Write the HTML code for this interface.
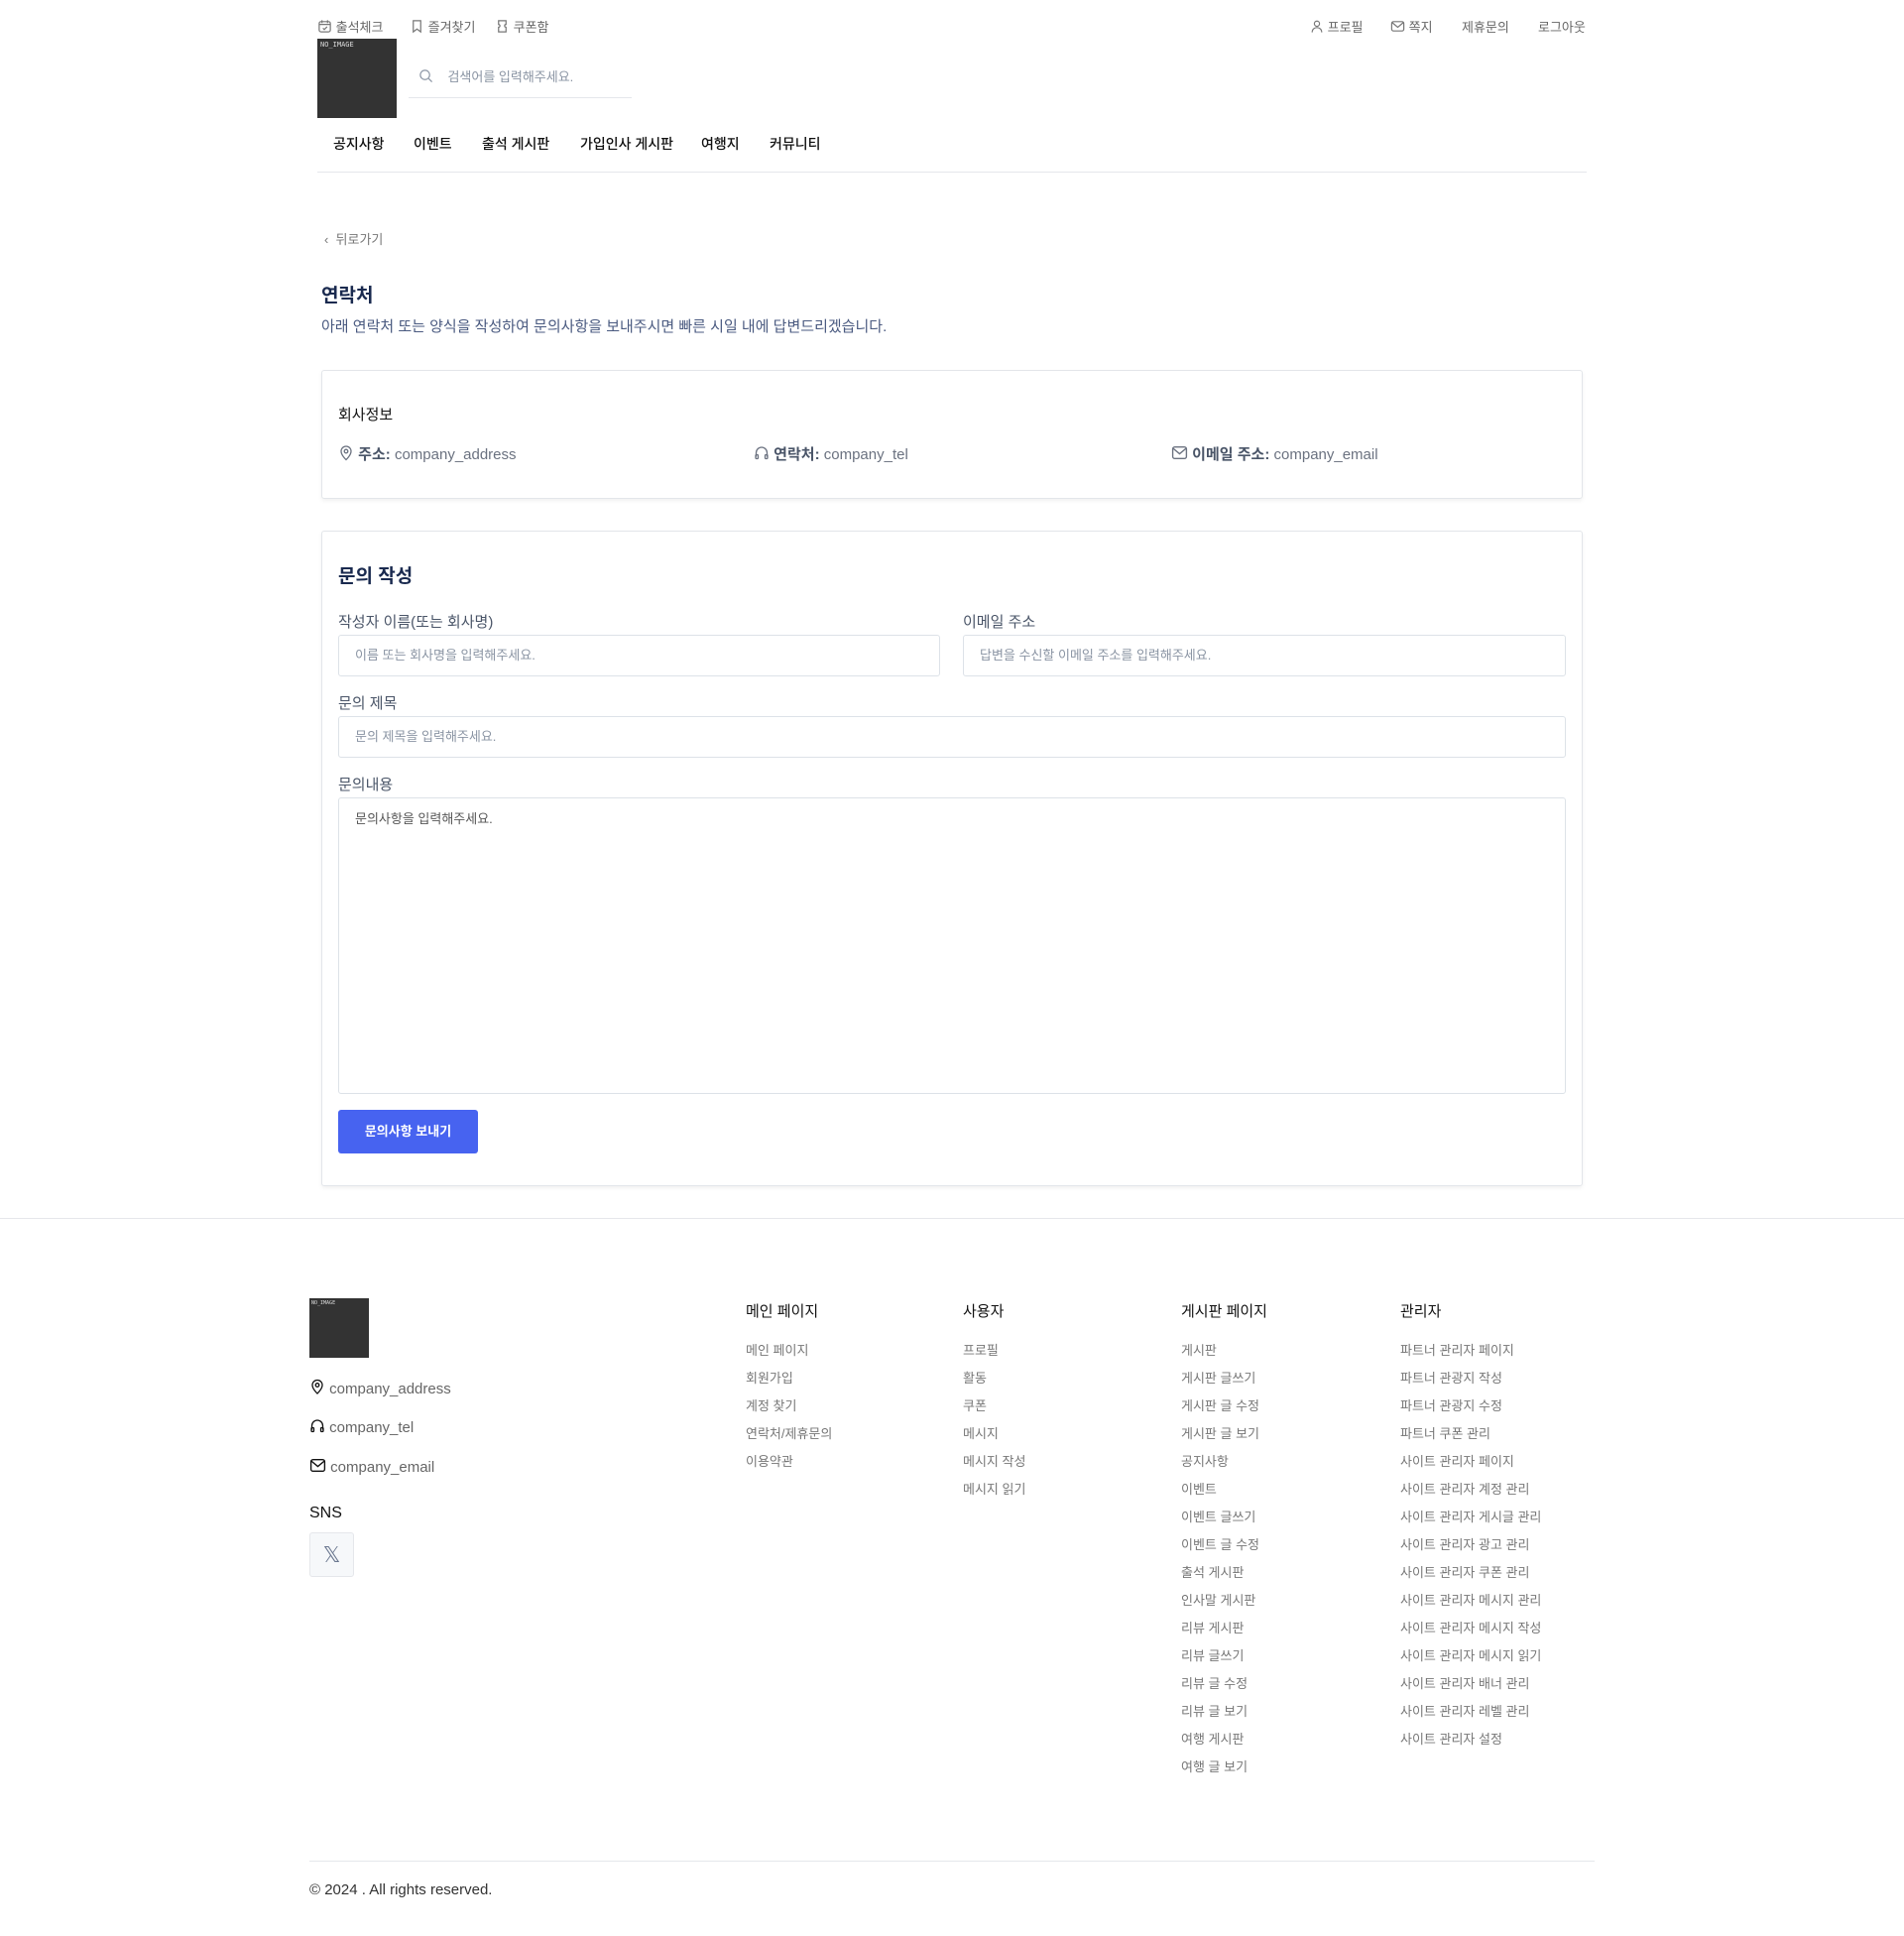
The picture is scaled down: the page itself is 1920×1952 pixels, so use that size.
<!DOCTYPE html>
<html><head><meta charset="utf-8">
<style>
*{box-sizing:border-box;margin:0;padding:0}
body{width:1920px;height:1952px;background:#fff;font-family:"Liberation Sans","Noto Sans CJK KR",sans-serif;color:#111;position:relative;overflow:hidden}
.a{position:absolute;white-space:nowrap}
.top{font-size:13px;color:#666;top:17px}
.nav{font-size:14px;color:#111;top:135px;font-weight:500}
svg{vertical-align:-2px}
.card{position:absolute;left:324px;width:1272px;border:1px solid #e3e6ea;border-radius:3px;box-shadow:0 2px 4px rgba(0,0,0,.06);background:#fff}
.lbl{font-size:15px;color:#4a5568}
.inp{position:absolute;border:1px solid #dde2e8;border-radius:3px;font-size:13px;color:#8a94a3;padding-left:16px}
.fh{font-size:15px;color:#111;top:1311px}
.fi{font-size:13px;color:#777;line-height:28px}
</style></head><body>
<div class="a top" style="left:320px"><svg width="15" height="15" viewBox="0 0 16 16" fill="none" stroke="#777" stroke-width="1.3"><rect x="2" y="3" width="12" height="11" rx="2"/><path d="M2 6h12M5 1.5v3M11 1.5v3M6 10l1.5 1.5L10.5 8.5"/></svg> 출석체크</div>
<div class="a top" style="left:413px"><svg width="15" height="15" viewBox="0 0 16 16" fill="none" stroke="#777" stroke-width="1.3"><path d="M4 2h8v12l-4-3-4 3z"/></svg> 즐겨찾기</div>
<div class="a top" style="left:499px"><svg width="15" height="15" viewBox="0 0 16 16" fill="none" stroke="#777" stroke-width="1.3"><path d="M4 2h8v4a1.5 1.5 0 0 0 0 3v5H4V9a1.5 1.5 0 0 0 0-3z"/></svg> 쿠폰함</div>
<div class="a top" style="left:1321px"><svg width="14" height="15" viewBox="0 0 16 16" fill="none" stroke="#777" stroke-width="1.3"><circle cx="8" cy="5" r="3"/><path d="M2.5 15c0-3.5 2.5-5.5 5.5-5.5s5.5 2 5.5 5.5"/></svg> 프로필</div>
<div class="a top" style="left:1402px"><svg width="15" height="15" viewBox="0 0 16 16" fill="none" stroke="#777" stroke-width="1.3"><rect x="1.5" y="3" width="13" height="10" rx="2"/><path d="M2 4l6 5 6-5"/></svg> 쪽지</div>
<div class="a top" style="left:1474px">제휴문의</div>
<div class="a top" style="left:1551px">로그아웃</div>
<div class="a" style="left:320px;top:39px;width:80px;height:80px;background:#333;color:#ddd;font-size:7px;padding:2px 3px;font-family:'DejaVu Sans Mono',monospace">NO_IMAGE</div>
<div class="a" style="left:412px;top:98px;width:225px;border-top:1px solid #e5e7eb"></div>
<div class="a" style="left:422px;top:67px;font-size:13px;color:#8a94a3"><svg width="15" height="15" viewBox="0 0 16 16" fill="none" stroke="#8a94a3" stroke-width="1.3"><circle cx="7" cy="7" r="5"/><path d="M11 11l3.5 3.5"/></svg>&nbsp;&nbsp;&nbsp;&nbsp;검색어를 입력해주세요.</div>
<div class="a nav" style="left:336px">공지사항</div>
<div class="a nav" style="left:417px">이벤트</div>
<div class="a nav" style="left:486px">출석 게시판</div>
<div class="a nav" style="left:585px">가입인사 게시판</div>
<div class="a nav" style="left:707px">여행지</div>
<div class="a nav" style="left:776px">커뮤니티</div>
<div class="a" style="left:320px;top:173px;width:1280px;border-top:1px solid #e5e7eb"></div>
<div class="a" style="left:327px;top:231px;font-size:13px;color:#777">‹&nbsp; 뒤로가기</div>
<div class="a" style="left:324px;top:283px;font-size:19px;font-weight:bold;color:#1a2a4f">연락처</div>
<div class="a" style="left:324px;top:318px;font-size:15px;color:#4a5a80">아래 연락처 또는 양식을 작성하여 문의사항을 보내주시면 빠른 시일 내에 답변드리겠습니다.</div>
<div class="card" style="top:373px;height:130px"></div>
<div class="a" style="left:341px;top:407px;font-size:15px">회사정보</div>
<div class="a" style="left:341px;top:447px;font-size:15px;color:#6b7280"><svg width="16" height="17" viewBox="0 0 16 16" fill="none" stroke="#6b7280" stroke-width="1.3"><path d="M8 15s5-4.5 5-8.5a5 5 0 0 0-10 0C3 10.5 8 15 8 15z"/><circle cx="8" cy="6.5" r="1.8"/></svg> <b style="color:#4a5568">주소:</b> company_address</div>
<div class="a" style="left:760px;top:447px;font-size:15px;color:#6b7280"><svg width="16" height="17" viewBox="0 0 16 16" fill="none" stroke="#6b7280" stroke-width="1.3"><path d="M2.5 12V8a5.5 5.5 0 0 1 11 0v4"/><rect x="2" y="10" width="2.5" height="4" rx="1"/><rect x="11.5" y="10" width="2.5" height="4" rx="1"/></svg> <b style="color:#4a5568">연락처:</b> company_tel</div>
<div class="a" style="left:1181px;top:447px;font-size:15px;color:#6b7280"><svg width="17" height="17" viewBox="0 0 16 16" fill="none" stroke="#6b7280" stroke-width="1.3"><rect x="1.5" y="2.5" width="13" height="11" rx="2"/><path d="M2 4l6 5 6-5"/></svg> <b style="color:#4a5568">이메일 주소:</b> company_email</div>
<div class="card" style="top:535px;height:661px"></div>
<div class="a" style="left:341px;top:566px;font-size:19px;font-weight:bold;color:#1a2a4f">문의 작성</div>
<div class="a lbl" style="left:341px;top:616px">작성자 이름(또는 회사명)</div>
<div class="a lbl" style="left:971px;top:616px">이메일 주소</div>
<div class="inp" style="left:341px;top:640px;width:607px;height:42px;line-height:40px">이름 또는 회사명을 입력해주세요.</div>
<div class="inp" style="left:971px;top:640px;width:608px;height:42px;line-height:40px">답변을 수신할 이메일 주소를 입력해주세요.</div>
<div class="a lbl" style="left:341px;top:698px">문의 제목</div>
<div class="inp" style="left:341px;top:722px;width:1238px;height:42px;line-height:40px">문의 제목을 입력해주세요.</div>
<div class="a lbl" style="left:341px;top:780px">문의내용</div>
<div class="inp" style="left:341px;top:804px;width:1238px;height:299px;padding-top:10px;color:#555">문의사항을 입력해주세요.</div>
<div class="a" style="left:341px;top:1119px;width:141px;height:44px;background:#4763f0;border-radius:3px;color:#fff;font-size:13px;font-weight:bold;text-align:center;line-height:44px">문의사항 보내기</div>
<div class="a" style="left:0;top:1228px;width:1920px;border-top:1px solid #e5e7eb"></div>
<div class="a" style="left:312px;top:1309px;width:60px;height:60px;background:#333;color:#ddd;font-size:5px;padding:2px;font-family:'DejaVu Sans Mono',monospace">NO_IMAGE</div>
<div class="a" style="left:312px;top:1389px;font-size:15px;color:#666"><svg width="16" height="18" viewBox="0 0 16 16" fill="none" stroke="#111" stroke-width="1.3"><path d="M8 15s5-4.5 5-8.5a5 5 0 0 0-10 0C3 10.5 8 15 8 15z"/><circle cx="8" cy="6.5" r="1.8"/></svg> company_address</div>
<div class="a" style="left:312px;top:1429px;font-size:15px;color:#666"><svg width="16" height="17" viewBox="0 0 16 16" fill="none" stroke="#111" stroke-width="1.3"><path d="M2.5 12V8a5.5 5.5 0 0 1 11 0v4"/><rect x="2" y="10" width="2.5" height="4" rx="1"/><rect x="11.5" y="10" width="2.5" height="4" rx="1"/></svg> company_tel</div>
<div class="a" style="left:312px;top:1469px;font-size:15px;color:#666"><svg width="17" height="17" viewBox="0 0 16 16" fill="none" stroke="#111" stroke-width="1.3"><rect x="1.5" y="2.5" width="13" height="11" rx="2"/><path d="M2 4l6 5 6-5"/></svg> company_email</div>
<div class="a" style="left:312px;top:1517px;font-size:16px">SNS</div>
<div class="a" style="left:312px;top:1545px;width:45px;height:45px;border:1px solid #e5e7eb;border-radius:3px;background:#f6f8fa;text-align:center;line-height:43px;font-size:22px;color:#6b7890">𝕏</div>
<div class="a fh" style="left:752px">메인 페이지</div>
<div class="a fi" style="left:752px;top:1348px">메인 페이지<br>회원가입<br>계정 찾기<br>연락처/제휴문의<br>이용약관</div>
<div class="a fh" style="left:971px">사용자</div>
<div class="a fi" style="left:971px;top:1348px">프로필<br>활동<br>쿠폰<br>메시지<br>메시지 작성<br>메시지 읽기</div>
<div class="a fh" style="left:1191px">게시판 페이지</div>
<div class="a fi" style="left:1191px;top:1348px">게시판<br>게시판 글쓰기<br>게시판 글 수정<br>게시판 글 보기<br>공지사항<br>이벤트<br>이벤트 글쓰기<br>이벤트 글 수정<br>출석 게시판<br>인사말 게시판<br>리뷰 게시판<br>리뷰 글쓰기<br>리뷰 글 수정<br>리뷰 글 보기<br>여행 게시판<br>여행 글 보기</div>
<div class="a fh" style="left:1412px">관리자</div>
<div class="a fi" style="left:1412px;top:1348px">파트너 관리자 페이지<br>파트너 관광지 작성<br>파트너 관광지 수정<br>파트너 쿠폰 관리<br>사이트 관리자 페이지<br>사이트 관리자 계정 관리<br>사이트 관리자 게시글 관리<br>사이트 관리자 광고 관리<br>사이트 관리자 쿠폰 관리<br>사이트 관리자 메시지 관리<br>사이트 관리자 메시지 작성<br>사이트 관리자 메시지 읽기<br>사이트 관리자 배너 관리<br>사이트 관리자 레벨 관리<br>사이트 관리자 설정</div>
<div class="a" style="left:312px;top:1876px;width:1296px;border-top:1px solid #e5e7eb"></div>
<div class="a" style="left:312px;top:1897px;font-size:15px;color:#333">© 2024 . All rights reserved.</div>
</body></html>
